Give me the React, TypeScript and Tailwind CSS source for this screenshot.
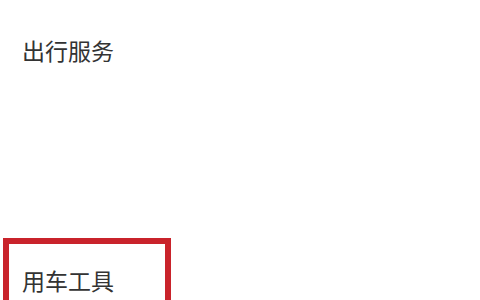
export default function App() {
  return (
    <div
      className="h-[300px] w-[480px] overflow-hidden bg-white text-[#333]"
      style={{ fontFamily: '"Noto Sans CJK SC", "Noto Sans", sans-serif' }}
    >
      {/* 出行服务 section */}
      <div className="px-[22px] pt-[34px] text-[23px] leading-[32px]">出行服务</div>

      {/* 用车工具 section, outlined */}
      <div className="ml-[3px] mt-[172px] h-[80px] w-[168px] border-[6px] border-b-0 border-[#c9232b] pl-[13px] pt-[20px] text-[23px] leading-[32px]">
        用车工具
      </div>
    </div>
  );
}
